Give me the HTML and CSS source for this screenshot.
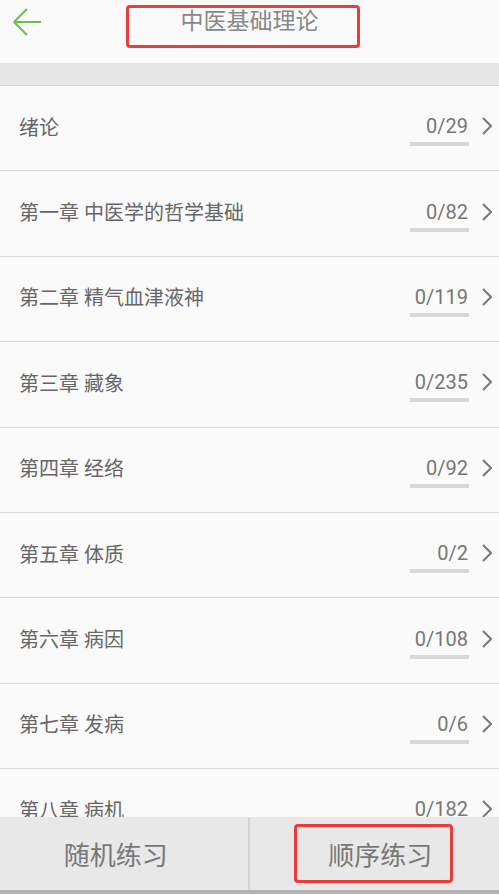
FILE: index.html
```html
<!DOCTYPE html>
<html>
<head>
	<meta charset="utf-8">
	<title>中医基础理论</title>
	<link rel="stylesheet" href="styles.css">
</head>
<body>
	<div class="page">
		<div class="header">
			<div class="back">
				<svg width="30" height="30" viewBox="0 0 30 30">
					<path d="M2 15 H29 M2 15 L15 2 M2 15 L15 28" fill="none" stroke="#6cbf4e" stroke-width="2"/>
				</svg>
			</div>
			<div class="title">中医基础理论</div>
			<div></div>
			<div class="mark mark-title"></div>
		</div>
		<div class="band"></div>

		<div class="list">
			<div class="row"><span class="name">绪论</span><span class="count"><span>0/29</span><i class="bar"></i></span><svg class="chev" width="10" height="18" viewBox="0 0 10 18"><path d="M1 1 L9 9 L1 17" fill="none" stroke="#777" stroke-width="2"/></svg></div>
			<div class="row"><span class="name">第一章 中医学的哲学基础</span><span class="count"><span>0/82</span><i class="bar"></i></span><svg class="chev" width="10" height="18" viewBox="0 0 10 18"><path d="M1 1 L9 9 L1 17" fill="none" stroke="#777" stroke-width="2"/></svg></div>
			<div class="row"><span class="name">第二章 精气血津液神</span><span class="count"><span>0/119</span><i class="bar"></i></span><svg class="chev" width="10" height="18" viewBox="0 0 10 18"><path d="M1 1 L9 9 L1 17" fill="none" stroke="#777" stroke-width="2"/></svg></div>
			<div class="row"><span class="name">第三章 藏象</span><span class="count"><span>0/235</span><i class="bar"></i></span><svg class="chev" width="10" height="18" viewBox="0 0 10 18"><path d="M1 1 L9 9 L1 17" fill="none" stroke="#777" stroke-width="2"/></svg></div>
			<div class="row"><span class="name">第四章 经络</span><span class="count"><span>0/92</span><i class="bar"></i></span><svg class="chev" width="10" height="18" viewBox="0 0 10 18"><path d="M1 1 L9 9 L1 17" fill="none" stroke="#777" stroke-width="2"/></svg></div>
			<div class="row"><span class="name">第五章 体质</span><span class="count"><span>0/2</span><i class="bar"></i></span><svg class="chev" width="10" height="18" viewBox="0 0 10 18"><path d="M1 1 L9 9 L1 17" fill="none" stroke="#777" stroke-width="2"/></svg></div>
			<div class="row"><span class="name">第六章 病因</span><span class="count"><span>0/108</span><i class="bar"></i></span><svg class="chev" width="10" height="18" viewBox="0 0 10 18"><path d="M1 1 L9 9 L1 17" fill="none" stroke="#777" stroke-width="2"/></svg></div>
			<div class="row"><span class="name">第七章 发病</span><span class="count"><span>0/6</span><i class="bar"></i></span><svg class="chev" width="10" height="18" viewBox="0 0 10 18"><path d="M1 1 L9 9 L1 17" fill="none" stroke="#777" stroke-width="2"/></svg></div>
			<div class="row"><span class="name">第八章 病机</span><span class="count"><span>0/182</span><i class="bar"></i></span><svg class="chev" width="10" height="18" viewBox="0 0 10 18"><path d="M1 1 L9 9 L1 17" fill="none" stroke="#777" stroke-width="2"/></svg></div>
		</div>

		<div class="footer">
			<div class="btn btn-random">随机练习</div>
			<div class="btn btn-order">顺序练习<div class="mark mark-order"></div></div>
		</div>
	</div>
</body>
</html>
```

FILE: styles.css
```css
body, html {
	margin: 0;
	padding: 0;
	background-color: #fafafa;
	font-family: Roboto, "Noto Sans CJK SC", sans-serif;
}
.page {
	width: 499px;
	height: 894px;
	display: flex;
	flex-direction: column;
	overflow: hidden;
}
.header {
	position: relative;
	height: 63px;
	flex-shrink: 0;
	display: grid;
	grid-template-columns: 1fr auto 1fr;
	align-items: start;
	background-color: #fafafa;
}
.back {
	height: 44px;
	display: flex;
	align-items: center;
	padding-left: 12px;
}
.title {
	line-height: 44px;
	font-size: 23px;
	color: #888;
}
.mark {
	position: absolute;
	border: 3px solid #ec3b3b;
	border-radius: 4px;
	box-sizing: border-box;
}
.mark-title {
	left: 126px;
	top: 5px;
	width: 234px;
	height: 43px;
}
.band {
	height: 22px;
	flex-shrink: 0;
	background-color: #e6e6e6;
	border-bottom: 1px solid #d4d4d4;
}
.list {
	flex: 1;
	overflow: hidden;
}
.row {
	height: 85.4px;
	box-sizing: border-box;
	border-bottom: 1px solid #d9d9d9;
	display: flex;
	align-items: center;
	padding: 0 7px 4px 19px;
	background-color: #fafafa;
}
.name {
	flex: 1;
	font-size: 20px;
	color: #666;
}
.count {
	display: flex;
	flex-direction: column;
	align-items: flex-end;
	padding-top: 9px;
	font-size: 20px;
	line-height: 22px;
	color: #777;
}
.bar {
	width: 59px;
	height: 4px;
	margin-top: 5px;
	margin-right: -1px;
	background-color: #d8d8d8;
}
.chev {
	margin-left: 14px;
}
.footer {
	height: 73px;
	flex-shrink: 0;
	display: flex;
	background-color: #e8e8e8;
	border-bottom: 4px solid #b4b4b4;
}
.btn {
	position: relative;
	flex: none;
	width: 50%;
	box-sizing: border-box;
	display: flex;
	align-items: center;
	justify-content: center;
	font-size: 26px;
	color: #777;
}
.btn-random {
	padding-right: 16px;
	border-right: 2px solid #d2d2d2;
}
.btn-order {
	padding-left: 12px;
}
.mark-order {
	left: 44px;
	top: 7px;
	width: 159px;
	height: 59px;
}
```
